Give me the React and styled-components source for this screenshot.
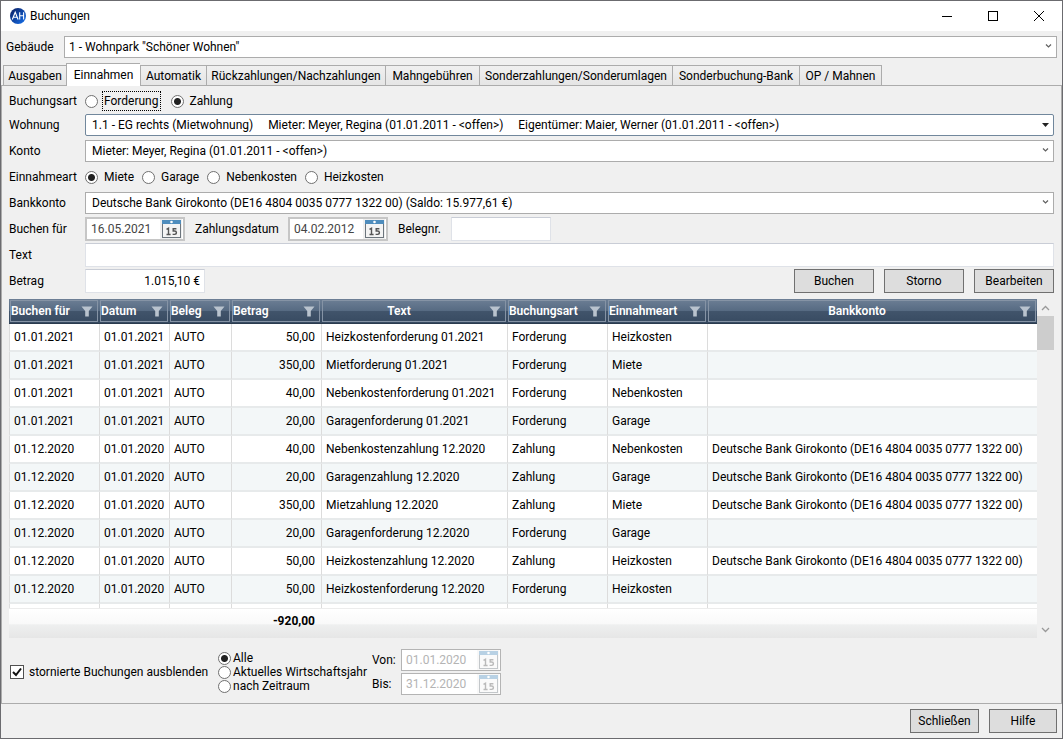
import React, { useState } from "react";
import styled, { createGlobalStyle } from "styled-components";

const GlobalStyle = createGlobalStyle`
  * {
    box-sizing: border-box;
  }
  body {
    margin: 0;
    background: #f0f0f0;
    color: #000;
    font-family: Roboto, "Open Sans", sans-serif;
    font-size: 12px;
    line-height: 16px;
  }
  button, input, select {
    font: inherit;
    color: inherit;
    margin: 0;
  }
`;

const Window = styled.div`
  display: flex;
  flex-direction: column;
  min-height: 100vh;
  border: 1px solid #6b6b6f;
`;

const TitleBar = styled.header`
  display: flex;
  align-items: center;
  height: 30px;
  padding-left: 9px;
  background: #fff;
`;

const Title = styled.h1`
  flex: 1;
  margin: 0 0 0 4px;
  font-size: 12px;
  font-weight: 400;
`;

const WindowButton = styled.button`
  display: flex;
  align-items: center;
  justify-content: center;
  width: 46px;
  height: 30px;
  padding: 0;
  border: none;
  background: none;
`;

const BuildingRow = styled.div`
  display: grid;
  grid-template-columns: 58px 1fr;
  align-items: center;
  padding: 5px 5px 5px;
`;

const SelectBox = styled.div`
  position: relative;
  min-width: 0;
`;

const SelectInput = styled.select(
  (props) => `
    display: block;
    appearance: none;
    width: 100%;
    height: 22px;
    padding: 0 20px 0 ${props.$inset}px;
    border: 1px solid ${props.$active ? "#71879c" : "#acacac"};
    border-radius: ${props.$active ? 2 : 0}px;
    background: #fff;
    white-space: pre;
  `
);

const Arrow = styled.svg`
  position: absolute;
  top: 6px;
  right: 4px;
  pointer-events: none;
`;

const Tabs = styled.nav`
  display: flex;
  align-items: flex-end;
  height: 22px;
  padding-left: 2px;
`;

const Tab = styled.button(
  (props) => `
    min-width: ${props.$width}px;
    height: ${props.$active ? 23 : 20}px;
    padding: 0;
    border: 1px solid #acacac;
    border-bottom: none;
    border-right-width: ${props.$last ? 1 : 0}px;
    background: ${props.$active ? "#fff" : "linear-gradient(#f0f0f0, #e5e5e5)"};
    white-space: nowrap;
    position: relative;
    z-index: ${props.$active ? 1 : 0};
    margin-bottom: ${props.$active ? -1 : 0}px;
  `
);

const Page = styled.main`
  flex: 1;
  padding: 2px 7px 0 7px;
  border: 1px solid #acacac;
`;

const Field = styled.div(
  (props) => `
    display: grid;
    grid-template-columns: 76px 1fr;
    align-items: center;
    height: ${props.$first ? 24 : 26}px;
    padding-top: ${props.$first ? 2 : 0}px;
  `
);

const Inline = styled.div(
  (props) => `
    display: flex;
    align-items: center;
    gap: ${props.$gap}px;
  `
);

const Choice = styled.label(
  (props) => `
    display: flex;
    align-items: center;
    gap: ${props.$gap}px;
    white-space: nowrap;
  `
);

const ChoiceText = styled.span(
  (props) => `
    outline: ${props.$focus ? "1px dotted #000" : "none"};
    outline-offset: 1px;
  `
);

const Radio = styled.input`
  appearance: none;
  flex: none;
  width: 13px;
  height: 13px;
  border: 1px solid #707070;
  border-radius: 50%;
  background: #fff;

  &:checked {
    background: radial-gradient(circle, #212121 3px, #fff 4px);
  }
`;

const CheckBox = styled.span`
  display: grid;

  & > * {
    grid-area: 1 / 1;
  }
  svg {
    pointer-events: none;
  }
`;

const CheckInput = styled.input`
  appearance: none;
  width: 14px;
  height: 14px;
  border: 1px solid #505050;
  background: #fff;
`;

const TextInput = styled.input(
  (props) => `
    width: ${props.$width || "100%"};
    height: 24px;
    padding: 0 4px;
    border: 1px solid #dfe2e8;
    border-top-color: #c9cdd6;
    background: #fff;
    text-align: ${props.$right ? "right" : "left"};
  `
);

const SideLabel = styled.label(
  (props) => `
    width: ${props.$width}px;
    white-space: nowrap;
  `
);

const DateBox = styled.div(
  (props) => `
    display: flex;
    align-items: center;
    width: 100px;
    height: ${props.$small ? 22 : 24}px;
    padding-right: 1px;
    border: ${props.$small ? 1 : 2}px solid ${props.$small ? "#b4b4b4" : "#c6c6c6"};
    background: #fff;
  `
);

const DateInput = styled.input`
  flex: 1;
  min-width: 0;
  height: 100%;
  padding: 0 0 0 4px;
  border: none;
  background: #fff;
  color: #444;

  &:disabled {
    color: #b4b4b4;
  }
`;

const DateButton = styled.button`
  display: flex;
  align-items: center;
  justify-content: flex-end;
  width: 22px;
  height: 100%;
  padding: 0;
  border: none;
  background: #f0f0f0;

  &:disabled {
    opacity: 0.4;
  }
`;

const PushButton = styled.button(
  (props) => `
    width: ${props.$width}px;
    height: 24px;
    padding: 0;
    border: 1px solid #707070;
    background: #ddd;
  `
);

const AmountRow = styled.div`
  display: flex;
  align-items: center;
  justify-content: space-between;
`;

const Grid = styled.div`
  display: flex;
  margin-top: 5px;
`;

const Table = styled.table`
  flex: 1;
  width: 100%;
  table-layout: fixed;
  border-collapse: separate;
  border-spacing: 0;
  background: #fff;
`;

const Col = styled.col(
  (props) => `
    width: ${props.$width ? props.$width + "px" : "auto"};
  `
);

const HeadCell = styled.th`
  height: 24px;
  padding: 1px;
  border-bottom: 1px solid #2b3b4e;
  background: linear-gradient(#6d7f95 0, #566a82 50%, #41546b 51%, #374a61 100%);
  color: #fff;
  font-weight: 600;
`;

const HeadContent = styled.div(
  (props) => `
    display: flex;
    align-items: center;
    height: 22px;
    padding-right: 4px;
    border: 1px solid #8593a5;
    white-space: nowrap;

    & > span {
      flex: 1;
      padding-right: ${props.$center ? 14 : 0}px;
      text-align: ${props.$center ? "center" : "left"};
    }
  `
);

const Row = styled.tr`
  background: ${(props) => (props.$odd ? "#f3f7f8" : "#fff")};
`;

const Cell = styled.td(
  (props) => `
    height: 28px;
    padding: 0 ${props.$right ? 6 : 0}px 0 4px;
    border-left: 1px solid #dcdcdc;
    border-bottom: 2px solid #e7eaeb;
    text-align: ${props.$right ? "right" : "left"};
    white-space: nowrap;
  `
);

const PeekCell = styled.td`
  height: 4px;
  padding: 0;
  border-left: 1px solid #dcdcdc;
`;

const SumCell = styled.td`
  height: 30px;
  padding: 0 6px 6px 0;
  border-top: 1px solid #ececec;
  background: linear-gradient(#fff 0, #f9f9f9 50%, #eeefef 55%, #e6e6e6 100%);
  text-align: right;
  font-weight: 700;
`;

const ScrollBar = styled.div`
  display: flex;
  flex-direction: column;
  width: 17px;
`;

const ScrollButton = styled.button`
  display: flex;
  align-items: center;
  justify-content: center;
  height: 17px;
  padding: 0;
  border: none;
  background: none;
`;

const ScrollTrack = styled.div`
  flex: 1;
`;

const ScrollThumb = styled.div`
  height: 34px;
  background: #cdcdcd;
`;

const FilterBar = styled.div`
  display: grid;
  grid-template-columns: 198px 144px auto;
  align-items: center;
  column-gap: 10px;
  padding: 11px 0 7px 1px;
`;

const Stack = styled.div(
  (props) => `
    display: flex;
    flex-direction: column;
    gap: ${props.$gap || 0}px;

    ${Choice} {
      height: 14px;
      line-height: 14px;
    }
  `
);

const Footer = styled.footer`
  display: flex;
  justify-content: flex-end;
  gap: 10px;
  padding: 5px 5px 5px;
`;

const Logo = () => (
  <svg width="16" height="16" viewBox="0 0 16 16">
    <defs>
      <linearGradient id="logo" x1="0" y1="0" x2="1" y2="1">
        <stop offset="0" stopColor="#0a1a5c" />
        <stop offset="1" stopColor="#1673f0" />
      </linearGradient>
    </defs>
    <circle cx="8" cy="8" r="8" fill="url(#logo)" />
    <g stroke="#fff" strokeWidth="1.1" fill="none">
      <path d="M2.3 11.5 L5.2 4.2 L8.1 11.5 M3.4 9.2 H7.1" />
      <path d="M9.7 4.2 V11.5 M13.6 4.2 V11.5 M9.7 7.8 H13.6" />
    </g>
  </svg>
);

const Funnel = () => (
  <svg width="12" height="11" viewBox="0 0 12 11">
    <path d="M0.5 0.5 H11.5 L7.8 5 V10.5 H4.2 V5 Z" fill="#b9c3ce" />
  </svg>
);

const CalendarIcon = () => (
  <svg width="20" height="20" viewBox="0 0 20 20">
    <rect x="0.5" y="1.5" width="18" height="17" fill="#f4f4f4" stroke="#6c757d" />
    <rect x="0" y="1" width="19" height="4" fill="#4f8dbd" />
    <circle cx="9.5" cy="3" r="1.3" fill="#fff" />
    <g fill="none" stroke="#555" strokeWidth="1.4">
      <path d="M4.5 10.4 L6.5 9.3 V15.8 M4.5 15.5 H8.6" />
      <path d="M14.4 9.7 H11.2 V12 H12.6 Q14.4 12 14.4 13.6 Q14.4 15.4 12.6 15.4 H10.6" />
    </g>
  </svg>
);

const Select = (props) => (
  <SelectBox>
    <SelectInput id={props.id} $inset={props.inset || 6} $active={props.active}>
      <option>{props.value}</option>
    </SelectInput>
    <Arrow width="9" height="8" viewBox="0 0 9 8">
      {props.active ? (
        <path d="M1 3 H8 L4.5 7 Z" fill="#222" />
      ) : (
        <path d="M2 2.5 L4.5 5 L7 2.5" fill="none" stroke="#606060" strokeWidth="1.2" />
      )}
    </Arrow>
  </SelectBox>
);

const DateField = (props) => (
  <DateBox $small={props.disabled}>
    <DateInput id={props.id} defaultValue={props.value} disabled={props.disabled} />
    <DateButton aria-label="Kalender" disabled={props.disabled}>
      <CalendarIcon />
    </DateButton>
  </DateBox>
);

const RadioGroup = (props) => {
  const [value, setValue] = useState(props.value);
  return props.options.map((option) => (
    <Choice key={option} $gap={props.gap}>
      <Radio
        type="radio"
        name={props.name}
        checked={value === option}
        onChange={() => setValue(option)}
      />
      <ChoiceText $focus={props.focus === option}>{option}</ChoiceText>
    </Choice>
  ));
};

const tabs = [
  ["Ausgaben", 63],
  ["Einnahmen", 74],
  ["Automatik", 66],
  ["Rückzahlungen/Nachzahlungen", 179],
  ["Mahngebühren", 94],
  ["Sonderzahlungen/Sonderumlagen", 193],
  ["Sonderbuchung-Bank", 127],
  ["OP / Mahnen", 83],
];

const columns = [
  { title: "Buchen für", width: 90 },
  { title: "Datum", width: 70 },
  { title: "Beleg", width: 62 },
  { title: "Betrag", width: 90 },
  { title: "Text", width: 186, center: true },
  { title: "Buchungsart", width: 100 },
  { title: "Einnahmeart", width: 100 },
  { title: "Bankkonto", center: true },
];

const bank = "Deutsche Bank Girokonto (DE16 4804 0035 0777 1322 00)";

const flat = [
  "1.1 - EG rechts (Mietwohnung)",
  "Mieter: Meyer, Regina (01.01.2011 - <offen>)",
  "Eigentümer: Maier, Werner (01.01.2011 - <offen>)",
].join("\u00a0\u00a0\u00a0\u00a0 ");

const bookings = [
  ["01.01.2021", "50,00", "Heizkostenforderung 01.2021", "Forderung", "Heizkosten"],
  ["01.01.2021", "350,00", "Mietforderung 01.2021", "Forderung", "Miete"],
  ["01.01.2021", "40,00", "Nebenkostenforderung 01.2021", "Forderung", "Nebenkosten"],
  ["01.01.2021", "20,00", "Garagenforderung 01.2021", "Forderung", "Garage"],
  ["01.12.2020", "40,00", "Nebenkostenzahlung 12.2020", "Zahlung", "Nebenkosten"],
  ["01.12.2020", "20,00", "Garagenzahlung 12.2020", "Zahlung", "Garage"],
  ["01.12.2020", "350,00", "Mietzahlung 12.2020", "Zahlung", "Miete"],
  ["01.12.2020", "20,00", "Garagenforderung 12.2020", "Forderung", "Garage"],
  ["01.12.2020", "50,00", "Heizkostenzahlung 12.2020", "Zahlung", "Heizkosten"],
  ["01.12.2020", "50,00", "Heizkostenforderung 12.2020", "Forderung", "Heizkosten"],
];

const BookingTable = () => (
  <Grid>
    <Table>
      <colgroup>
        {columns.map((column) => (
          <Col key={column.title} $width={column.width} />
        ))}
      </colgroup>
      <thead>
        <tr>
          {columns.map((column) => (
            <HeadCell key={column.title}>
              <HeadContent $center={column.center}>
                <span>{column.title}</span>
                <Funnel />
              </HeadContent>
            </HeadCell>
          ))}
        </tr>
      </thead>
      <tbody>
        {bookings.map(([date, amount, text, kind, income], index) => (
          <Row key={text} $odd={index % 2 === 1}>
            <Cell>{date}</Cell>
            <Cell>{index < 4 ? date : "01.01.2020"}</Cell>
            <Cell>AUTO</Cell>
            <Cell $right>{amount}</Cell>
            <Cell>{text}</Cell>
            <Cell>{kind}</Cell>
            <Cell>{income}</Cell>
            <Cell>{kind === "Zahlung" ? bank : ""}</Cell>
          </Row>
        ))}
        <tr>
          {columns.map((column) => (
            <PeekCell key={column.title} />
          ))}
        </tr>
      </tbody>
      <tfoot>
        <tr>
          <SumCell colSpan={4}>-920,00</SumCell>
          <SumCell colSpan={4} />
        </tr>
      </tfoot>
    </Table>
    <ScrollBar>
      <ScrollButton aria-label="Nach oben">
        <svg width="9" height="6" viewBox="0 0 9 6">
          <path d="M1 5 L4.5 1.5 L8 5" fill="none" stroke="#999" strokeWidth="1.3" />
        </svg>
      </ScrollButton>
      <ScrollTrack>
        <ScrollThumb />
      </ScrollTrack>
      <ScrollButton aria-label="Nach unten">
        <svg width="9" height="6" viewBox="0 0 9 6">
          <path d="M1 1 L4.5 4.5 L8 1" fill="none" stroke="#999" strokeWidth="1.3" />
        </svg>
      </ScrollButton>
    </ScrollBar>
  </Grid>
);

const App = () => {
  const [tab, setTab] = useState("Einnahmen");
  return (
    <Window>
      <GlobalStyle />
      <TitleBar>
        <Logo />
        <Title>Buchungen</Title>
        <WindowButton aria-label="Minimieren">
          <svg width="10" height="10" viewBox="0 0 10 10">
            <path d="M0 5.5 H10" stroke="#000" />
          </svg>
        </WindowButton>
        <WindowButton aria-label="Maximieren">
          <svg width="10" height="10" viewBox="0 0 10 10">
            <rect x="0.5" y="0.5" width="9" height="9" fill="none" stroke="#000" />
          </svg>
        </WindowButton>
        <WindowButton aria-label="Fenster schließen">
          <svg width="10" height="10" viewBox="0 0 10 10">
            <path d="M0 0 L10 10 M10 0 L0 10" stroke="#000" />
          </svg>
        </WindowButton>
      </TitleBar>

      <BuildingRow>
        <label htmlFor="building">Gebäude</label>
        <Select id="building" inset={4} value={'1 - Wohnpark "Schöner Wohnen"'} />
      </BuildingRow>

      <Tabs>
        {tabs.map(([title, width], index) => (
          <Tab
            key={title}
            $width={width}
            $active={tab === title}
            $last={index === tabs.length - 1}
            onClick={() => setTab(title)}
          >
            {title}
          </Tab>
        ))}
      </Tabs>

      <Page>
        <Field $first>
          <span>Buchungsart</span>
          <Inline $gap={12}>
            <RadioGroup
              name="kind"
              gap={6}
              value="Zahlung"
              focus="Forderung"
              options={["Forderung", "Zahlung"]}
            />
          </Inline>
        </Field>
        <Field>
          <label htmlFor="flat">Wohnung</label>
          <Select id="flat" active value={flat} />
        </Field>
        <Field>
          <label htmlFor="account">Konto</label>
          <Select id="account" value="Mieter: Meyer, Regina (01.01.2011 - <offen>)" />
        </Field>
        <Field>
          <span>Einnahmeart</span>
          <Inline $gap={8}>
            <RadioGroup
              name="income"
              gap={6}
              value="Miete"
              options={["Miete", "Garage", "Nebenkosten", "Heizkosten"]}
            />
          </Inline>
        </Field>
        <Field>
          <label htmlFor="bank">Bankkonto</label>
          <Select id="bank" value={bank + " (Saldo: 15.977,61 €)"} />
        </Field>
        <Field>
          <label htmlFor="bookFor">Buchen für</label>
          <Inline $gap={10}>
            <DateField id="bookFor" value="16.05.2021" />
            <SideLabel $width={83} htmlFor="paidOn">Zahlungsdatum</SideLabel>
            <DateField id="paidOn" value="04.02.2012" />
            <SideLabel $width={43} htmlFor="receipt">Belegnr.</SideLabel>
            <TextInput id="receipt" $width="100px" />
          </Inline>
        </Field>
        <Field>
          <label htmlFor="text">Text</label>
          <TextInput id="text" />
        </Field>
        <Field>
          <label htmlFor="amount">Betrag</label>
          <AmountRow>
            <TextInput id="amount" $width="120px" $right defaultValue="1.015,10 €" />
            <Inline $gap={10}>
              <PushButton $width={80}>Buchen</PushButton>
              <PushButton $width={80}>Storno</PushButton>
              <PushButton $width={80}>Bearbeiten</PushButton>
            </Inline>
          </AmountRow>
        </Field>

        <BookingTable />

        <FilterBar>
          <Choice $gap={5}>
            <CheckBox>
              <CheckInput type="checkbox" defaultChecked />
              <svg width="14" height="14" viewBox="0 0 14 14">
                <path d="M3 7 L6 10 L11 3.5" fill="none" stroke="#111" strokeWidth="2" />
              </svg>
            </CheckBox>
            stornierte Buchungen ausblenden
          </Choice>
          <Stack>
            <RadioGroup
              name="period"
              gap={2}
              value="Alle"
              options={["Alle", "Aktuelles Wirtschaftsjahr", "nach Zeitraum"]}
            />
          </Stack>
          <Stack $gap={2}>
            <Inline $gap={4}>
              <SideLabel $width={25} htmlFor="from">Von:</SideLabel>
              <DateField id="from" value="01.01.2020" disabled />
            </Inline>
            <Inline $gap={4}>
              <SideLabel $width={25} htmlFor="to">Bis:</SideLabel>
              <DateField id="to" value="31.12.2020" disabled />
            </Inline>
          </Stack>
        </FilterBar>
      </Page>

      <Footer>
        <PushButton $width={69}>Schließen</PushButton>
        <PushButton $width={68}>Hilfe</PushButton>
      </Footer>
    </Window>
  );
};

export default App;
